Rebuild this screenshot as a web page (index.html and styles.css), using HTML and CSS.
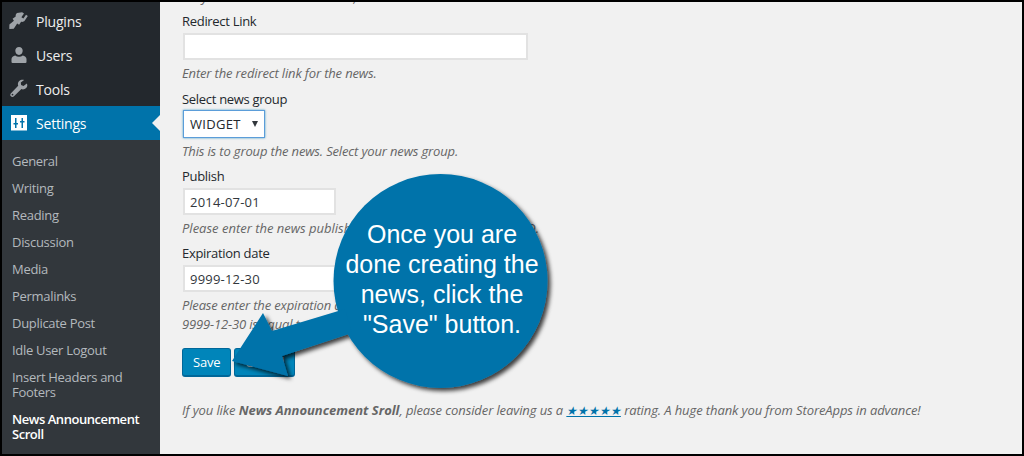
FILE: index.html
```html
<!DOCTYPE html>
<html lang="en">
<head>
    <meta charset="UTF-8">
    <title>News Announcement Scroll</title>
    <link rel="stylesheet" href="styles.css">
</head>
<body>
    <div class="frame">
        <div class="sidebar">
            <ul class="menu">
                <li class="menu-item">
                    <svg class="menu-icon" viewBox="0 0 20 20"><path fill="#9ea3a8" d="M13.100 1.200l1.900 1.200-2.600 3.900 2 1.300 2.600-3.900 1.800 1.200-3 4.600c-.9 1.300-2.400 1.700-3.700 1.300l-2 3-1.900-1.200-2.300 3.500-1.200 1.700-4.100.1-.3-.2.100-4.100 3.300-2.900 1.200-1-1.300-2 3.100-2.200c-.2-1.300.2-2.600 1.300-3.400z"/></svg>
                    Plugins
                </li>
                <li class="menu-item">
                    <svg class="menu-icon" viewBox="0 0 20 20"><path fill="#9ea3a8" d="M10 2c2.200 0 3.700 1.700 3.700 3.800S12.200 10 10 10 6.300 7.900 6.300 5.800 7.800 2 10 2zm-7.500 15v-3c0-1.900 1.800-3.200 3.700-3.500 1 .8 2.300 1.200 3.800 1.200s2.800-.4 3.800-1.200c1.900.3 3.700 1.600 3.700 3.500v3c0 .8-.7 1-1.500 1h-12c-.8 0-1.500-.2-1.500-1z"/></svg>
                    Users
                </li>
                <li class="menu-item">
                    <svg class="menu-icon" viewBox="0 0 20 20"><path fill="#9ea3a8" d="M17.800 4.500l-3.300 2.600-2.400-1-.3-2.600L15.100 1c-1.700-.6-3.600-.2-4.900 1-1.300 1.300-1.600 3.100-1 4.700L2 14.200c-1 1-.9 2.300-.1 3.100.8.800 2.200.9 3.100-.1l7.400-7.100c1.600.6 3.500.2 4.800-1 1.200-1.300 1.500-3 .6-4.600zM3.500 16.500a.9.9 0 1 1 0-1.800.9.9 0 0 1 0 1.800z"/></svg>
                    Tools
                </li>
                <li class="menu-item current">
                    <svg class="menu-icon" viewBox="0 0 20 20"><path fill="#fff" d="M2 2h16v15.500H2z"/><path fill="#0073aa" d="M6 5h1.500v5H9v1.500H7.500V15H6v-3.500H4.500V10H6zM12.500 5H14v3h1.500v1.500H14V15h-1.500V9.500H11V8h1.500z"/></svg>
                    Settings
                </li>
            </ul>
            <ul class="submenu">
                <li>General</li>
                <li>Writing</li>
                <li>Reading</li>
                <li>Discussion</li>
                <li>Media</li>
                <li>Permalinks</li>
                <li>Duplicate Post</li>
                <li>Idle User Logout</li>
                <li>Insert Headers and Footers</li>
                <li class="active">News Announcement Scroll</li>
            </ul>
        </div>
        <div class="content">
            <p class="hint cut-off">Only enter the news title in this, it will show in the scroll.</p>

            <label class="field-label">Redirect Link</label>
            <input class="text-input wide" type="text">
            <p class="hint">Enter the redirect link for the news.</p>

            <label class="field-label group-label">Select news group</label>
            <div class="select-box">WIDGET <span class="caret"></span></div>
            <p class="hint">This is to group the news. Select your news group.</p>

            <label class="field-label">Publish</label>
            <input class="text-input short" type="text" value="2014-07-01">
            <p class="hint publish-hint">Please enter the news publish date in the format YYYY-MM-DD.</p>

            <label class="field-label">Expiration date</label>
            <input class="text-input short" type="text" value="9999-12-30">
            <p class="hint two-line">Please enter the expiration date in the format YYYY-MM-DD.<br>9999-12-30 is equal to no expire.</p>

            <div class="buttons">
                <button class="btn">Save</button>
                <button class="btn">Cancel</button>
            </div>

            <p class="hint rating">If you like <b>News Announcement Sroll</b>, please consider leaving us a <a href="#">&#9733;&#9733;&#9733;&#9733;&#9733;</a> rating. A huge thank you from StoreApps in advance!</p>
        </div>

        <svg class="callout-art" viewBox="0 0 1024 456">
            <defs>
                <filter id="drop" x="-20%" y="-20%" width="140%" height="140%">
                    <feDropShadow dx="3" dy="3" stdDeviation="2" flood-color="#000" flood-opacity="0.75"/>
                </filter>
            </defs>
            <g filter="url(#drop)" fill="#0073aa">
                <circle cx="440.500" cy="281" r="107"/>
                <path d="M345 309L272 331L263 313L232 361L288 376L282 356L352 333z"/>
            </g>
        </svg>
        <div class="callout-text">Once you are<br>done creating the<br>news, click the<br>"Save" button.</div>
    </div>
</body>
</html>
```
FILE: styles.css
```css
* {
    box-sizing: border-box;
}
html, body {
    margin: 0;
    padding: 0;
}
body {
    font-family: "Open Sans", "Noto Sans", sans-serif;
    font-size: 13px;
    color: #23282d;
    background-color: #000;
}
.frame {
    position: relative;
    display: flex;
    width: 1024px;
    height: 456px;
    border: 2px solid #000;
    overflow: hidden;
    background-color: #f1f1f1;
}
.sidebar {
    width: 158px;
    flex-shrink: 0;
    background-color: #32373c;
}
.menu, .submenu {
    list-style: none;
    margin: 0;
    padding: 0;
}
.menu {
    padding-top: 2px;
    background-color: #23282d;
}
.menu-item {
    position: relative;
    display: flex;
    align-items: center;
    height: 34px;
    padding-left: 7px;
    color: #eee;
    font-size: 14px;
    letter-spacing: -0.2px;
}
.menu-icon {
    width: 20px;
    height: 20px;
    margin-right: 7px;
}
.menu-item.current {
    background-color: #0073aa;
    color: #fff;
}
.menu-item.current::after {
    content: "";
    position: absolute;
    right: 0;
    top: 9px;
    border: 8px solid transparent;
    border-right-color: #f1f1f1;
}
.submenu {
    padding: 8px 0 0 10px;
    color: #b4b9be;
    font-size: 13px;
    letter-spacing: -0.3px;
}
.submenu li {
    padding: 6px 10px 6px 0;
    line-height: 15px;
}
.submenu .active {
    color: #fff;
    font-weight: 600;
    letter-spacing: -0.45px;
}
.content {
    flex: 1;
    padding: 0 0 0 22px;
}
.hint {
    margin: 0;
    color: #666;
    font-style: italic;
    font-size: 13px;
    line-height: 18px;
    letter-spacing: -0.15px;
}
.publish-hint {
    letter-spacing: 0;
}
.cut-off {
    margin: -14px 0 -1px;
    height: 18px;
}
.field-label {
    display: block;
    margin-top: 6px;
    line-height: 20px;
    letter-spacing: -0.3px;
}
.group-label {
    margin-top: 7px;
}
.text-input {
    display: block;
    height: 27px;
    margin: 2px 0 4px 1px;
    padding: 0 5px;
    border: 2px solid #e2e2e2;
    background-color: #fff;
    font-family: inherit;
    font-size: 13px;
    color: #32373c;
    letter-spacing: 0.2px;
}
.wide {
    width: 345px;
}
.short {
    width: 153px;
}
.select-box {
    display: flex;
    align-items: center;
    justify-content: space-between;
    width: 82px;
    height: 28px;
    margin: 1px 0 4px 1px;
    padding: 0 6px;
    border: 1px solid #5b9dd9;
    box-shadow: 0 0 2px rgba(30,140,190,.8);
    background-color: #fff;
    letter-spacing: 0.3px;
}
.caret {
    border-top: 6px solid #32373c;
    border-left: 3px solid transparent;
    border-right: 3px solid transparent;
}
.two-line {
    line-height: 19px;
}
.buttons {
    display: flex;
    gap: 3px;
    margin-top: 14px;
}
.btn {
    height: 29px;
    padding: 0 10px;
    border: 1px solid #006799;
    border-bottom-width: 2px;
    border-radius: 3px;
    background-color: #0085ba;
    color: #fff;
    font-family: inherit;
    font-size: 13px;
    letter-spacing: -0.2px;
}
.rating {
    margin-top: 24px;
    letter-spacing: -0.1px;
}
.rating b {
    font-weight: 700;
    letter-spacing: 0;
}
.rating a {
    color: #0073aa;
    font-size: 12px;
}
.callout-art {
    position: absolute;
    left: -2px;
    top: -2px;
    width: 1024px;
    height: 456px;
}
.callout-text {
    position: absolute;
    left: 329px;
    top: 217px;
    width: 222px;
    text-align: center;
    font-family: "Liberation Sans", Arial, sans-serif;
    font-size: 25px;
    line-height: 30px;
    color: #fff;
}
```
